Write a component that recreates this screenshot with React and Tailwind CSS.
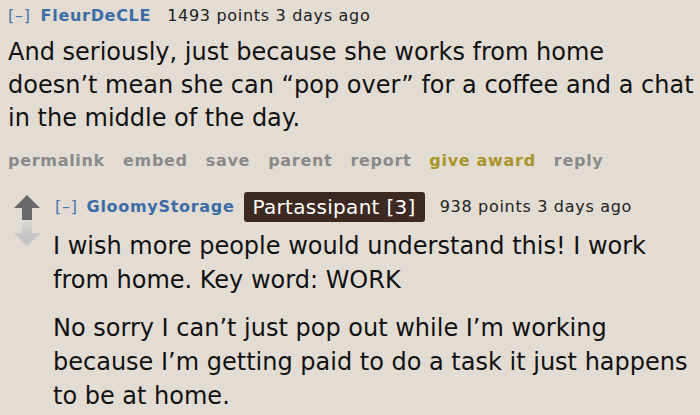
import React from 'react';

const font = { fontFamily: '"DejaVu Sans", Verdana, sans-serif' };

const Arrow = ({ up }) => (
  <svg width="26" height="25" viewBox="0 0 26 25" className="block">
    <defs>
      <linearGradient id="downFade" x1="0" y1="0" x2="0" y2="1">
        <stop offset="0" stopColor="#dedbd6" />
        <stop offset="0.5" stopColor="#c6c6c6" />
        <stop offset="1" stopColor="#c2c2c2" />
      </linearGradient>
    </defs>
    {up ? (
      <path d="M13 0 L26 13 L18 13 L18 25 L8 25 L8 13 L0 13 Z" fill="#686868" />
    ) : (
      <path d="M8 0 L18 0 L18 12 L26 12 L13 25 L0 12 L8 12 Z" fill="url(#downFade)" />
    )}
  </svg>
);

const App = () => {
  return (
    <div className="w-[700px] h-[415px] overflow-hidden bg-[#e3dcd3] text-[#111]" style={font}>
      <div className="pl-[8px] pt-[5px]">
        <div className="flex items-baseline text-[16px] leading-[22px] tracking-[0.7px]">
          <span className="text-[#4a78b0]">[–]</span>
          <span className="ml-[10px] font-bold text-[#3b6ca6]">FleurDeCLE</span>
          <span className="ml-[16px] text-[#222]">1493 points 3 days ago</span>
        </div>
        <div className="mt-[9px] whitespace-nowrap text-[24px] leading-[33px]">
          And seriously, just because she works from home<br />
          doesn’t mean she can “pop over” for a coffee and a chat<br />
          in the middle of the day.
        </div>
        <div className="mt-[15px] flex gap-[18px] text-[16px] font-bold leading-[22px] tracking-[0.7px] text-[#8a8a8a]">
          <span>permalink</span>
          <span>embed</span>
          <span>save</span>
          <span>parent</span>
          <span>report</span>
          <span className="text-[#a8952a]">give award</span>
          <span>reply</span>
        </div>
        <div className="mt-[20px] flex">
          <div className="w-[45px] flex flex-col items-start pl-[6px] pt-[3px] gap-[1px]">
            <Arrow up />
            <Arrow />
          </div>
          <div className="flex-1">
            <div className="ml-[2px] flex items-center text-[16px] leading-[22px] tracking-[0.7px]">
              <span className="text-[#4a78b0]">[–]</span>
              <span className="ml-[9px] font-bold text-[#3b6ca6]">GloomyStorage</span>
              <span className="ml-[9px] rounded-[3px] bg-[#3c2a22] px-[9px] py-[3px] text-[20px] leading-[24px] tracking-[0.3px] text-white">Partassipant [3]</span>
              <span className="ml-[15px] text-[#222]">938 points 3 days ago</span>
            </div>
            <div className="mt-[7px] whitespace-nowrap text-[24px] leading-[34px]">
              <p>I wish more people would understand this! I work<br />from home. Key word: WORK</p>
              <p className="mt-[14px]">No sorry I can’t just pop out while I’m working<br />because I’m getting paid to do a task it just happens<br />to be at home.</p>
            </div>
          </div>
        </div>
      </div>
    </div>
  );
};

export default App;
